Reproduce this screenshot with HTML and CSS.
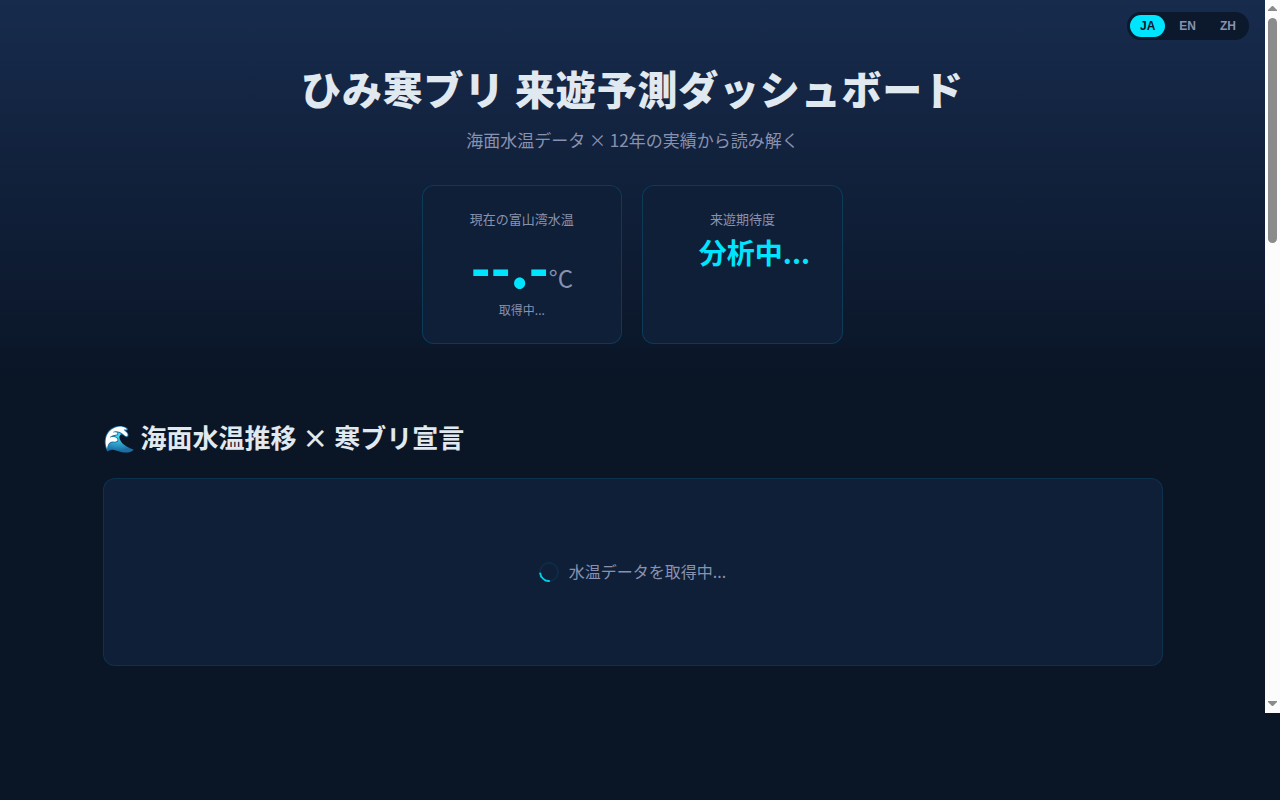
FILE: index.html
```
<!DOCTYPE html>
<html lang="ja">
<head>
    <meta charset="UTF-8">
    <meta name="viewport" content="width=device-width, initial-scale=1.0">
    <title>ひみ寒ブリ 来遊予測ダッシュボード</title>
    <link rel="stylesheet" href="styles.css">
</head>
<body>
    <div class="page">
        <header class="hero">
            <nav class="lang-switcher" aria-label="Language">
                <button type="button" class="lang-btn active">JA</button>
                <button type="button" class="lang-btn">EN</button>
                <button type="button" class="lang-btn">ZH</button>
            </nav>
            <h1>ひみ寒ブリ 来遊予測ダッシュボード</h1>
            <p class="subtitle">海面水温データ × 12年の実績から読み解く</p>
            <div class="hero-cards">
                <div class="hero-card">
                    <div class="card-label">現在の富山湾水温</div>
                    <div class="temp"><span class="temp-value">--.-</span><span class="temp-unit">°C</span></div>
                    <div class="card-note">取得中...</div>
                </div>
                <div class="hero-card">
                    <div class="card-label">来遊期待度</div>
                    <div class="forecast">分析中...</div>
                </div>
            </div>
        </header>

        <main class="container">
            <section>
                <h2>🌊 海面水温推移 × 寒ブリ宣言</h2>
                <div class="chart-panel">
                    <div class="loading">
                        <span class="spinner"></span>
                        <span>水温データを取得中...</span>
                    </div>
                </div>
            </section>
        </main>
    </div>

    <div class="scrollbar" aria-hidden="true">
        <svg class="scroll-arrow" viewBox="0 0 15 18"><path d="M7 6h1l4 4v1H3v-1z"/></svg>
        <div class="scroll-thumb"></div>
        <svg class="scroll-arrow scroll-down" viewBox="0 0 15 18"><path d="M3 6h9v1l-4 4H7L3 7z"/></svg>
    </div>
</body>
</html>
```
FILE: styles.css
```
:root {
    --bg: #0a1526;
    --bg-card: #0f1f38;
    --accent: #00e5ff;
    --text: #e0e8f0;
    --text-dim: #8892b0;
}

* {
    margin: 0;
    padding: 0;
    box-sizing: border-box;
}

body {
    display: flex;
    align-items: flex-start;
    min-height: 100vh;
    background: var(--bg);
    color: var(--text);
    font-family: "Noto Sans CJK JP", sans-serif;
    font-size: 16px;
    line-height: 1.6;
}

.page {
    flex: 1;
    min-width: 0;
}

/* Header */
.hero {
    position: relative;
    padding: 58px 20px 40px;
    text-align: center;
    background: linear-gradient(180deg, #172b4d 0%, var(--bg) 100%);
}

.lang-switcher {
    position: absolute;
    top: 12px;
    right: 16px;
    display: flex;
    gap: 4px;
    padding: 3px;
    border-radius: 20px;
    background: #0c182b;
}

.lang-btn {
    padding: 4px 10px;
    border: none;
    border-radius: 16px;
    background: transparent;
    color: var(--text-dim);
    font-family: "Liberation Sans", Arial, sans-serif;
    font-size: 12px;
    font-weight: bold;
    line-height: 14px;
    cursor: pointer;
}

.lang-btn.active {
    background: var(--accent);
    color: var(--bg);
}

h1 {
    font-size: 40px;
    font-weight: 900;
    line-height: 60px;
    letter-spacing: 0.02em;
}

.subtitle {
    margin: 8px 0 32px;
    color: var(--text-dim);
    font-size: 17px;
    line-height: 27px;
}

.hero-cards {
    display: flex;
    flex-wrap: wrap;
    justify-content: center;
    gap: 20px;
}

.hero-card {
    min-width: 200px;
    padding: 24px 32px;
    border: 1px solid rgba(0, 190, 240, 0.18);
    border-radius: 12px;
    background: var(--bg-card);
}

.card-label {
    color: var(--text-dim);
    font-size: 13px;
    line-height: 18px;
}

.temp {
    display: flex;
    align-items: baseline;
    justify-content: center;
    margin: 7px 0 4px;
}

.temp-value {
    color: var(--accent);
    font-size: 52px;
    font-weight: 900;
    line-height: 62px;
}

.temp-unit {
    color: var(--text-dim);
    font-size: 24px;
    line-height: 32px;
}

.card-note {
    color: var(--text-dim);
    font-size: 12px;
    line-height: 18px;
}

.forecast {
    padding-left: 24px;
    color: var(--accent);
    font-size: 28px;
    font-weight: 700;
    line-height: 48px;
}

/* Content */
.container {
    max-width: 1100px;
    margin: 0 auto;
    padding: 32px 20px;
}

h2 {
    margin-bottom: 20px;
    font-size: 26px;
    font-weight: 700;
    line-height: 42px;
}

.chart-panel {
    padding: 80px 24px;
    border: 1px solid rgba(0, 190, 240, 0.12);
    border-radius: 12px;
    background: var(--bg-card);
}

.loading {
    display: flex;
    align-items: center;
    justify-content: center;
    gap: 10px;
    color: var(--text-dim);
}

.spinner {
    width: 20px;
    height: 20px;
    border: 2px solid rgba(0, 190, 240, 0.08);
    border-bottom-color: #00d0e8;
    border-radius: 50%;
    transform: rotate(40deg);
}

/* Scrollbar */
.scrollbar {
    position: sticky;
    top: 0;
    display: flex;
    flex-direction: column;
    width: 15px;
    height: 89.1vh;
    background: #fcfcfc;
}

.scroll-arrow {
    width: 15px;
    height: 18px;
    fill: #8b8b8b;
}

.scroll-thumb {
    height: 225px;
    margin: 0 3px;
    border-radius: 5px;
    background: #8b8b8b;
}

.scroll-down {
    margin-top: auto;
}
```
